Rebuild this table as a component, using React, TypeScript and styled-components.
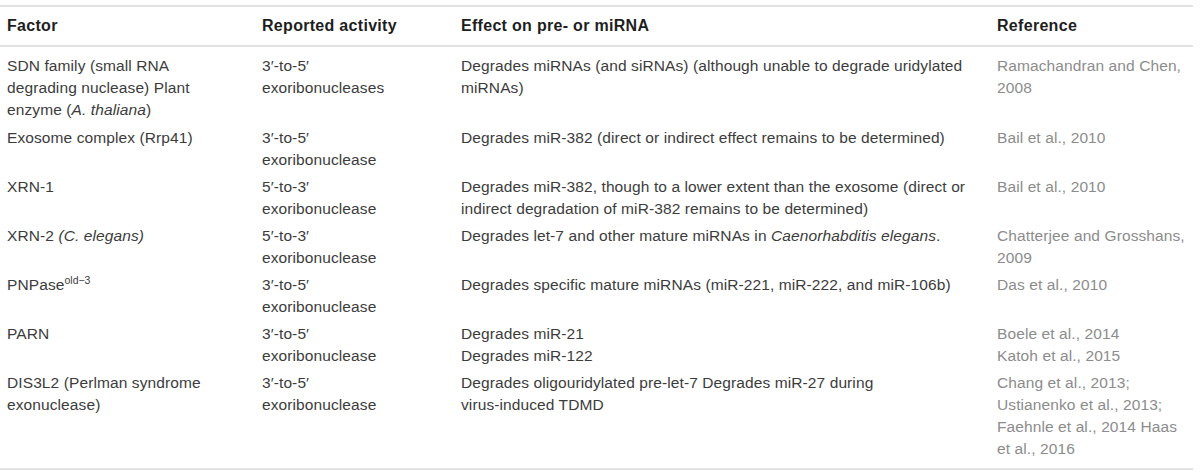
import React from "react";
import styled, { createGlobalStyle } from "styled-components";

const GlobalStyle = createGlobalStyle`
  html, body { margin: 0; padding: 0; background: #ffffff; }
  body { font-family: "Liberation Sans", Arial, sans-serif; }
  *, *::before, *::after { box-sizing: border-box; }
`;

const Wrapper = styled.div`
  width: 1193px;
  padding-top: 5px;
`;

const Table = styled.table`
  width: 1193px;
  border-collapse: collapse;
  table-layout: fixed;
  border-top: 2px solid #e2e2e2;
  border-bottom: 2px solid #e2e2e2;
  font-size: 15.5px;
  letter-spacing: 0.1px;
  line-height: 22px;
`;

const HeadCell = styled.th<{ $w: number }>`
  width: ${(p) => p.$w}px;
  text-align: left;
  font-weight: bold;
  font-size: 16px;
  letter-spacing: 0.3px;
  color: #1e1e1e;
  padding: 8px 10px 8px 7px;
  border-bottom: 2px solid #e2e2e2;
  vertical-align: middle;
`;

const Row = styled.tr<{ $first?: boolean; $last?: boolean }>`
  & > td {
    padding-top: ${(p) => (p.$first ? 8 : 3)}px;
    padding-bottom: ${(p) => (p.$last ? 8 : p.$first ? 3 : 2)}px;
  }
`;

const Cell = styled.td<{ $pr?: number; $muted?: boolean }>`
  vertical-align: top;
  padding-left: 7px;
  padding-right: ${(p) => p.$pr ?? 20}px;
  color: ${(p) => (p.$muted ? "#8c8c8c" : "#3c3c3c")};
`;

const Line = styled.span`
  display: block;
`;

const NoWrap = styled.span`
  white-space: nowrap;
`;

const Sup = styled.sup`
  font-size: 10.5px;
  line-height: 0;
  vertical-align: 6px;
  letter-spacing: 0;
`;

type R = {
  factor: React.ReactNode;
  activity: React.ReactNode;
  effect: React.ReactNode;
  reference: React.ReactNode;
};

const rows: R[] = [
  {
    factor: (
      <>
        SDN family (small RNA degrading nuclease) Plant enzyme (<i>A. thaliana</i>)
      </>
    ),
    activity: "3′-to-5′ exoribonucleases",
    effect:
      "Degrades miRNAs (and siRNAs) (although unable to degrade uridylated miRNAs)",
    reference: "Ramachandran and Chen, 2008",
  },
  {
    factor: "Exosome complex (Rrp41)",
    activity: "3′-to-5′ exoribonuclease",
    effect:
      "Degrades miR-382 (direct or indirect effect remains to be determined)",
    reference: "Bail et al., 2010",
  },
  {
    factor: "XRN-1",
    activity: "5′-to-3′ exoribonuclease",
    effect:
      "Degrades miR-382, though to a lower extent than the exosome (direct or indirect degradation of miR-382 remains to be determined)",
    reference: "Bail et al., 2010",
  },
  {
    factor: (
      <>
        XRN-2 <i>(C. elegans)</i>
      </>
    ),
    activity: "5′-to-3′ exoribonuclease",
    effect: (
      <>
        Degrades let-7 and other mature miRNAs in <i>Caenorhabditis elegans</i>.
      </>
    ),
    reference: "Chatterjee and Grosshans, 2009",
  },
  {
    factor: (
      <>
        PNPase<Sup>old−3</Sup>
      </>
    ),
    activity: "3′-to-5′ exoribonuclease",
    effect:
      "Degrades specific mature miRNAs (miR-221, miR-222, and miR-106b)",
    reference: "Das et al., 2010",
  },
  {
    factor: "PARN",
    activity: "3′-to-5′ exoribonuclease",
    effect: (
      <>
        <Line>Degrades miR-21</Line>
        <Line>Degrades miR-122</Line>
      </>
    ),
    reference: (
      <>
        <Line>Boele et al., 2014</Line>
        <Line>Katoh et al., 2015</Line>
      </>
    ),
  },
  {
    factor: "DIS3L2 (Perlman syndrome exonuclease)",
    activity: "3′-to-5′ exoribonuclease",
    effect: (
      <>
        Degrades oligouridylated pre-let-7 Degrades miR-27 during{" "}
        <NoWrap>virus-induced</NoWrap> TDMD
      </>
    ),
    reference:
      "Chang et al., 2013; Ustianenko et al., 2013; Faehnle et al., 2014 Haas et al., 2016",
  },
];

const widths = [255, 199, 536, 203];

export default function App() {
  return (
    <>
      <GlobalStyle />
      <Wrapper>
        <Table>
          <thead>
            <tr>
              <HeadCell $w={widths[0]}>Factor</HeadCell>
              <HeadCell $w={widths[1]}>Reported activity</HeadCell>
              <HeadCell $w={widths[2]}>Effect on pre- or miRNA</HeadCell>
              <HeadCell $w={widths[3]}>Reference</HeadCell>
            </tr>
          </thead>
          <tbody>
            {rows.map((r, i) => (
              <Row key={i} $first={i === 0} $last={i === rows.length - 1}>
                <Cell $pr={33}>{r.factor}</Cell>
                <Cell $pr={60}>{r.activity}</Cell>
                <Cell $pr={21}>{r.effect}</Cell>
                <Cell $pr={1} $muted>
                  {r.reference}
                </Cell>
              </Row>
            ))}
          </tbody>
        </Table>
      </Wrapper>
    </>
  );
}
